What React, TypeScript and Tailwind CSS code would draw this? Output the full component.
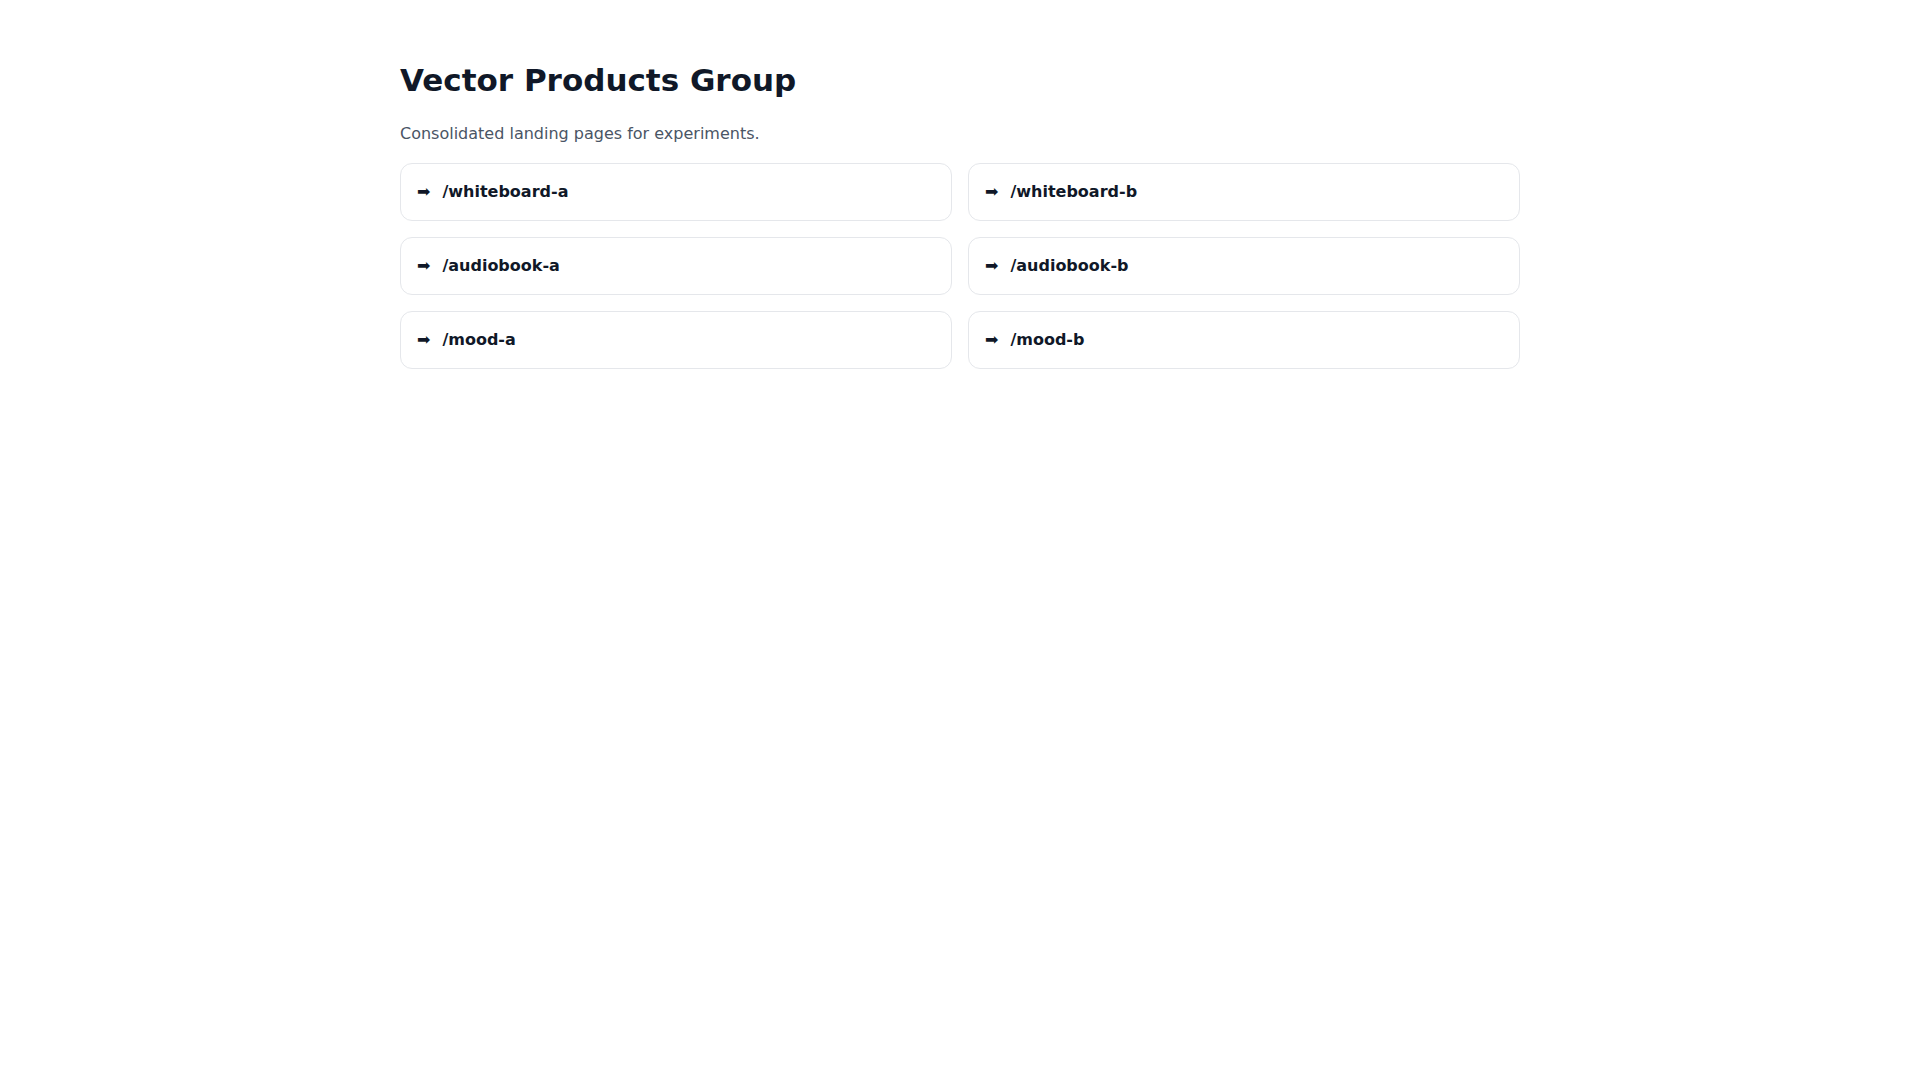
import React from "react";

const links = [
  "/whiteboard-a",
  "/whiteboard-b",
  "/audiobook-a",
  "/audiobook-b",
  "/mood-a",
  "/mood-b",
];

export default function App() {
  return (
    <div
      className="min-h-screen bg-white"
      style={{ fontFamily: '"DejaVu Sans", sans-serif' }}
    >
      <div className="mx-auto max-w-[1120px] pt-[62px]">
        <h1 className="text-[31px] leading-9 font-bold text-gray-900">
          Vector Products Group
        </h1>
        <p className="mt-6 text-base leading-6 text-gray-600">
          Consolidated landing pages for experiments.
        </p>
        <div className="mt-[17px] grid grid-cols-2 gap-4">
          {links.map((l) => (
            <a
              key={l}
              href={l}
              className="flex items-center gap-3 rounded-xl border border-gray-200 bg-white px-4 py-4"
            >
              <span className="text-base leading-6 text-gray-900">➡</span>
              <span className="text-base leading-6 font-bold text-gray-900">
                {l}
              </span>
            </a>
          ))}
        </div>
      </div>
    </div>
  );
}
